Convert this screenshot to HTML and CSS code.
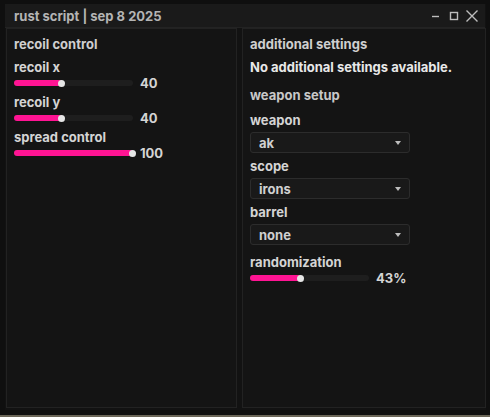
FILE: index.html
```html
<!DOCTYPE html>
<html>
<head>
<meta charset="utf-8">
<link rel="stylesheet" href="styles.css">
</head>
<body>
<div class="window">
  <div class="titlebar">
    <span class="title">rust script | sep 8 2025</span>
    <div class="controls">
      <svg class="ctl" width="12" height="12" viewBox="0 0 12 12"><line x1="1" y1="6.5" x2="8" y2="6.5" stroke="#bdbdbd" stroke-width="1.4"/></svg>
      <svg class="ctl" width="12" height="12" viewBox="0 0 12 12"><rect x="2.5" y="2.5" width="7" height="7" fill="none" stroke="#bdbdbd" stroke-width="1.4"/></svg>
      <svg class="ctl" width="14" height="14" viewBox="0 0 14 14"><path d="M1.5 1.5 L12.5 12.5 M12.5 1.5 L1.5 12.5" stroke="#bdbdbd" stroke-width="1.4"/></svg>
    </div>
  </div>
  <div class="content">
    <div class="panel left">
      <div class="heading">recoil control</div>
      <div class="label">recoil x</div>
      <div class="slider-row">
        <div class="track"><div class="fill" style="width:40%"></div></div>
        <span class="value">40</span>
      </div>
      <div class="label">recoil y</div>
      <div class="slider-row">
        <div class="track"><div class="fill" style="width:40%"></div></div>
        <span class="value">40</span>
      </div>
      <div class="label">spread control</div>
      <div class="slider-row">
        <div class="track"><div class="fill" style="width:100%"></div></div>
        <span class="value">100</span>
      </div>
    </div>
    <div class="panel right">
      <div class="heading">additional settings</div>
      <div class="note">No additional settings available.</div>
      <div class="heading sub">weapon setup</div>
      <div class="label">weapon</div>
      <div class="combo"><span>ak</span><span class="arrow"></span></div>
      <div class="label">scope</div>
      <div class="combo"><span>irons</span><span class="arrow"></span></div>
      <div class="label">barrel</div>
      <div class="combo"><span>none</span><span class="arrow"></span></div>
      <div class="label rnd">randomization</div>
      <div class="slider-row">
        <div class="track"><div class="fill" style="width:43%"></div></div>
        <span class="value">43%</span>
      </div>
    </div>
  </div>
</div>
<div class="desk"></div>
</body>
</html>
```
FILE: styles.css
```css
html, body {
  margin: 0;
  padding: 0;
  background: #0f0f0f;
  width: 490px;
  height: 417px;
  overflow: hidden;
  font-family: Inter, "Liberation Sans", sans-serif;
}
.window {
  position: relative;
  margin: 4px 4px 0 5px;
  height: 406px;
  background: #121212;
  display: flex;
  flex-direction: column;
}
.titlebar {
  height: 23px;
  background: #1a1a1a;
  border-bottom: 1px solid #232323;
  display: flex;
  align-items: center;
  justify-content: space-between;
  padding: 0 6px 0 9px;
  margin-right: 1px;
}
.title {
  color: #b4b4b4;
  font-size: 13px;
  font-weight: 700;
}
.controls {
  display: flex;
  align-items: center;
  gap: 5px;
}
.ctl { display: block; }
.content {
  flex: 1;
  display: flex;
  gap: 5px;
  padding: 0 0 2px 1px;
}
.panel {
  background: #141414;
  border: 1px solid #222;
  padding: 8px 7px;
}
.left { width: 215px; }
.right { flex: 1; }
.heading {
  color: #cfcfcf;
  font-size: 13px;
  font-weight: 700;
  line-height: 15px;
  margin-bottom: 8px;
}
.label {
  color: #d4d4d4;
  font-size: 13px;
  font-weight: 700;
  line-height: 15px;
}
.slider-row {
  display: flex;
  align-items: center;
  height: 16px;
  margin-bottom: 4px;
}
.track {
  width: 119px;
  height: 6px;
  background: #1e1e1e;
  border-radius: 3px;
  position: relative;
}
.fill {
  height: 6px;
  background: #ff1493;
  border-radius: 3px;
  position: relative;
}
.fill::after {
  content: "";
  position: absolute;
  right: -3px;
  top: -0.5px;
  width: 7px;
  height: 7px;
  border-radius: 50%;
  background: #e6e6e6;
}
.value {
  color: #d4d4d4;
  font-size: 13px;
  font-weight: 700;
  margin-left: 7px;
}
.note {
  color: #e8e8e8;
  font-size: 13px;
  font-weight: 700;
  line-height: 15px;
  margin-bottom: 13px;
}
.heading.sub { margin-bottom: 10px; color: #c8c8c8; }
.combo {
  box-sizing: border-box;
  width: 160px;
  height: 21px;
  border: 1px solid #2c2c2c;
  border-radius: 3px;
  background: #191919;
  display: flex;
  align-items: center;
  justify-content: space-between;
  padding: 0 8px 0 8px;
  color: #d0d0d0;
  font-size: 13px;
  font-weight: 700;
  margin: 4px 0 6px;
}
.arrow {
  width: 0;
  height: 0;
  border-left: 3px solid transparent;
  border-right: 3px solid transparent;
  border-top: 4px solid #bdbdbd;
}
.label.rnd { margin-top: 10px; }
.desk {
  position: absolute;
  left: 0;
  top: 415px;
  width: 490px;
  height: 2px;
  background: #6b6658;
}
```
